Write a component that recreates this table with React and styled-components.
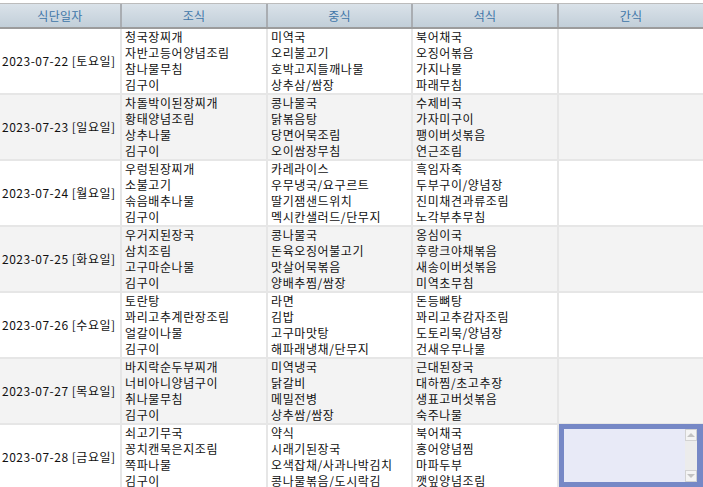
import React from 'react';
import styled, { createGlobalStyle } from 'styled-components';

const GlobalStyle = createGlobalStyle`
  html, body {
    margin: 0;
    padding: 0;
    background: #fff;
  }
  body {
    font-family: "Noto Sans CJK KR", "DejaVu Sans", sans-serif;
    font-size: 12px;
    color: #111;
    overflow: hidden;
  }
`;

const COLUMNS = '120px 144px 143px 144px 144px';

const Page = styled.div`
  padding-top: 3px;
  width: 703px;
`;

const Table = styled.div`
  display: flex;
  flex-direction: column;
  gap: 2px;
  background: #e6e6e6;
`;

const HeaderRow = styled.div`
  display: grid;
  grid-template-columns: ${COLUMNS};
  gap: 2px;
  background: #a9adb2;
  border-top: 1px solid #bcbcbc;
  border-bottom: 2px solid #9c9c9c;
`;

const HeaderCell = styled.div`
  height: 23px;
  line-height: 23px;
  text-align: center;
  color: #3f76a8;
  font-size: 12px;
  letter-spacing: 0.3px;
  background: linear-gradient(to bottom, #dae2e9, #c2cfd9);
`;

const Row = styled.div`
  display: grid;
  grid-template-columns: ${COLUMNS};
  gap: 2px;
`;

const Cell = styled.div`
  background: ${(p) => (p.$alt ? '#f3f3f3' : '#fff')};
  padding: 0 0 0 3px;
  line-height: 16px;
  min-height: 64px;
  letter-spacing: 0.6px;
  white-space: nowrap;
  overflow: hidden;
`;

const DateCell = styled(Cell)`
  display: flex;
  align-items: center;
  padding-left: 2px;
  letter-spacing: 0.5px;
`;

const MenuLine = styled.div`
  height: 16px;
`;

const SnackCell = styled.div`
  background: ${(p) => (p.$alt ? '#f3f3f3' : '#fff')};
  min-height: 64px;
`;

const MemoBox = styled.div`
  display: flex;
  height: 53px;
  border: 5px solid #7688c6;
  border-right-width: 6px;
  background: #e8eaf7;
  margin-top: -1px;
`;

const MemoText = styled.div`
  flex: 1;
`;

const ScrollBar = styled.div`
  width: 12px;
  display: flex;
  flex-direction: column;
  background: #ececec;
`;

const ScrollButton = styled.div`
  height: 12px;
  box-sizing: border-box;
  border: 1px solid #d2d2d2;
  background: #f4f4f4;
  display: flex;
  align-items: center;
  justify-content: center;
`;

const ScrollTrack = styled.div`
  flex: 1;
`;

const Arrow = ({ down }) => (
  <svg width="8" height="6" viewBox="0 0 8 6">
    <polygon points={down ? '0,1 8,1 4,5' : '0,5 8,5 4,1'} fill="#c3c3c3" />
  </svg>
);

const days = [
  {
    date: '2023-07-22 [토요일]',
    meals: [
      ['청국장찌개', '자반고등어양념조림', '참나물무침', '김구이'],
      ['미역국', '오리불고기', '호박고지들깨나물', '상추삼/쌈장'],
      ['북어채국', '오징어볶음', '가지나물', '파래무침'],
    ],
  },
  {
    date: '2023-07-23 [일요일]',
    meals: [
      ['차돌박이된장찌개', '황태양념조림', '상추나물', '김구이'],
      ['콩나물국', '닭볶음탕', '당면어묵조림', '오이쌈장무침'],
      ['수제비국', '가자미구이', '팽이버섯볶음', '연근조림'],
    ],
  },
  {
    date: '2023-07-24 [월요일]',
    meals: [
      ['우렁된장찌개', '소불고기', '솎음배추나물', '김구이'],
      ['카레라이스', '우무냉국/요구르트', '딸기잼샌드위치', '멕시칸샐러드/단무지'],
      ['흑임자죽', '두부구이/양념장', '진미채견과류조림', '노각부추무침'],
    ],
  },
  {
    date: '2023-07-25 [화요일]',
    meals: [
      ['우거지된장국', '삼치조림', '고구마순나물', '김구이'],
      ['콩나물국', '돈육오징어불고기', '맛살어묵볶음', '양배추찜/쌈장'],
      ['옹심이국', '후랑크야채볶음', '새송이버섯볶음', '미역초무침'],
    ],
  },
  {
    date: '2023-07-26 [수요일]',
    meals: [
      ['토란탕', '꽈리고추계란장조림', '얼갈이나물', '김구이'],
      ['라면', '김밥', '고구마맛탕', '해파래냉채/단무지'],
      ['돈등뼈탕', '꽈리고추감자조림', '도토리묵/양념장', '건새우무나물'],
    ],
  },
  {
    date: '2023-07-27 [목요일]',
    meals: [
      ['바지락순두부찌개', '너비아니양념구이', '취나물무침', '김구이'],
      ['미역냉국', '닭갈비', '메밀전병', '상추쌈/쌈장'],
      ['근대된장국', '대하찜/초고추장', '생표고버섯볶음', '숙주나물'],
    ],
  },
  {
    date: '2023-07-28 [금요일]',
    meals: [
      ['쇠고기무국', '꽁치캔묵은지조림', '쪽파나물', '김구이'],
      ['약식', '시래기된장국', '오색잡채/사과나박김치', '콩나물볶음/도시락김'],
      ['북어채국', '홍어양념찜', '마파두부', '깻잎양념조림'],
    ],
    memo: true,
  },
];

const headers = ['식단일자', '조식', '중식', '석식', '간식'];

export default function App() {
  return (
    <Page>
      <GlobalStyle />
      <HeaderRow>
        {headers.map((h) => (
          <HeaderCell key={h}>{h}</HeaderCell>
        ))}
      </HeaderRow>
      <Table>
        {days.map((day, i) => {
          const alt = i % 2 === 1;
          return (
            <Row key={day.date}>
              <DateCell $alt={alt}>{day.date}</DateCell>
              {day.meals.map((items, j) => (
                <Cell key={j} $alt={alt}>
                  {items.map((item) => (
                    <MenuLine key={item}>{item}</MenuLine>
                  ))}
                </Cell>
              ))}
              <SnackCell $alt={alt}>
                {day.memo && (
                  <MemoBox>
                    <MemoText />
                    <ScrollBar>
                      <ScrollButton>
                        <Arrow />
                      </ScrollButton>
                      <ScrollTrack />
                      <ScrollButton>
                        <Arrow down />
                      </ScrollButton>
                    </ScrollBar>
                  </MemoBox>
                )}
              </SnackCell>
            </Row>
          );
        })}
      </Table>
    </Page>
  );
}
